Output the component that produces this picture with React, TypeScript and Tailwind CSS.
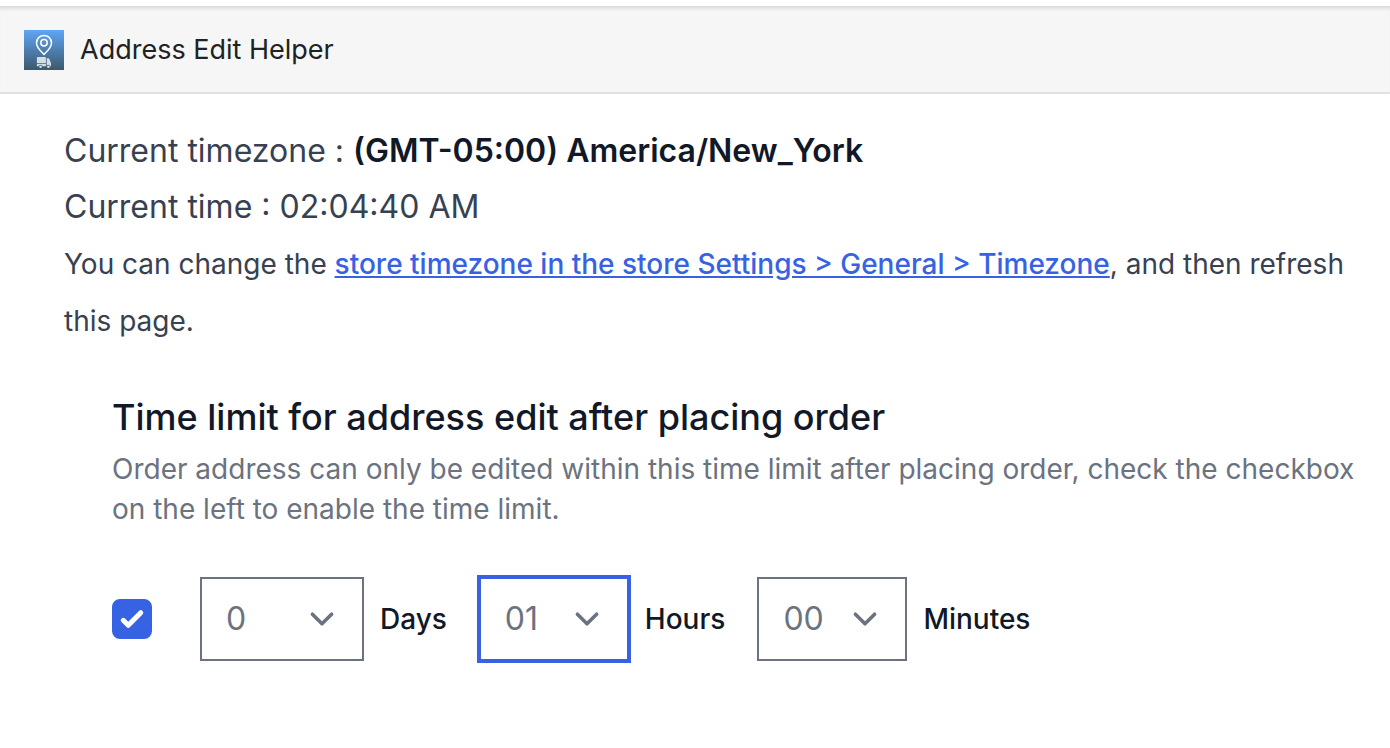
import React, { useState } from 'react';

const range = (count: number) => Array.from({ length: count }, (_, i) => i);
const twoDigits = (n: number) => String(n).padStart(2, '0');

const AppIcon: React.FC = () => (
  <svg viewBox="0 0 40 40" className="w-10 h-10 shrink-0" aria-hidden="true">
    <defs>
      <linearGradient id="app-icon-bg" x1="0" y1="0" x2="0" y2="1">
        <stop offset="0" stopColor="#5fa5f6" />
        <stop offset="1" stopColor="#3d596b" />
      </linearGradient>
    </defs>
    <rect width="40" height="40" fill="url(#app-icon-bg)" />
    <path
      d="M20 24.4C17.2 21.4 12.5 17.8 12.5 12.9a7.5 7.5 0 0 1 15 0c0 4.9-4.7 8.5-7.5 11.5z"
      fill="none"
      stroke="#fff"
      strokeWidth="1.5"
      strokeLinejoin="round"
    />
    <circle cx="20" cy="12.8" r="3.2" fill="none" stroke="#fff" strokeWidth="1.5" />
    <g fill="#d5dee5">
      <path d="M13.6 27h7.6q.7 0 .7.7v5.5h-9v-5.5q0-.7.7-.7z" />
      <path d="M12.9 34h9v2.2h-3.2a2.2 2.2 0 0 0-4.2 0h-1.6z" />
      <path d="M22.7 28.3h1.7q.6 0 1 .6l1.3 3.5q.3.5.3 1v2.8h-.8a2 2 0 0 0-3.5-.6z" />
      <circle cx="16.6" cy="36.8" r="1.3" />
      <circle cx="24.4" cy="36.8" r="1.3" />
    </g>
  </svg>
);

const TimeSelect: React.FC<{
  id: string;
  label: string;
  value: string;
  options: string[];
  onChange: (value: string) => void;
  wide?: boolean;
  active?: boolean;
}> = ({ id, label, value, options, onChange, wide = false, active = false }) => {
  const stateStyle = active ? 'border-[#3662e3] ring-2 ring-[#3662e3]' : 'border-[#6b7280]';

  return (
    <div className="flex items-center gap-4">
      <div className={`relative text-[#6b7280] ${wide ? 'w-[164px]' : 'w-[150px]'}`}>
        <select
          id={id}
          value={value}
          onChange={e => onChange(e.target.value)}
          className={`block w-full h-[84px] appearance-none border-2 bg-white pl-6 pr-16 text-[32px] outline-none ${stateStyle}`}
        >
          {options.map(opt => <option key={opt} value={opt}>{opt}</option>)}
        </select>
        <svg
          viewBox="0 0 20 20"
          className="pointer-events-none absolute right-[18px] top-[18px] w-12 h-12"
          fill="none"
          stroke="currentColor"
          strokeWidth="1.5"
          strokeLinecap="round"
          strokeLinejoin="round"
        >
          <path d="M6 8l4 4 4-4" />
        </svg>
      </div>
      <label htmlFor={id} className="text-[28px] font-medium text-[#111827]">{label}</label>
    </div>
  );
};

export default function App() {
  const [enabled, setEnabled] = useState(true);
  const [days, setDays] = useState('0');
  const [hours, setHours] = useState('01');
  const [minutes, setMinutes] = useState('00');

  return (
    <div className="min-h-screen bg-white pt-[6px] font-['Inter',sans-serif] text-[#374151]">
      <header className="flex items-center gap-4 h-[88px] px-6 pt-[2px] bg-[#f6f6f6] border-b-2 border-[#e1e1e1] shadow-[inset_0_5px_4px_-3px_#d2d4d4]">
        <AppIcon />
        <h1 className="text-[27px] text-[#202223]">Address Edit Helper</h1>
      </header>

      <main className="pt-[29px] pl-16 pr-6">
        <section className="text-[32px] leading-[56px]">
          <p>
            Current timezone : <strong className="font-semibold text-[#111827]">(GMT-05:00) America/New_York</strong>
          </p>
          <p>Current time : 02:04:40 AM</p>
          <p>
            <span className="text-[28px]">
              You can change the{' '}
              <a href="#timezone" className="font-medium text-[#3662e3] underline">
                store timezone in the store Settings &gt; General &gt; Timezone
              </a>
              , and then refresh this page.
            </span>
          </p>
        </section>

        <section className="mt-10 pl-12">
          <h2 className="text-[36px] leading-[56px] font-medium text-[#111827]">
            Time limit for address edit after placing order
          </h2>
          <p className="mt-1 text-[28px] leading-10 text-[#6b7280]">
            Order address can only be edited within this time limit after placing order, check the checkbox on the left to enable the time limit.
          </p>

          <div className="mt-12 flex items-center gap-12">
            <div className="relative w-10 h-10">
              <input
                type="checkbox"
                aria-label="Enable time limit"
                checked={enabled}
                onChange={e => setEnabled(e.target.checked)}
                className="block w-10 h-10 appearance-none rounded-lg border-2 border-[#6b7280] checked:border-[#3662e3] checked:bg-[#3662e3]"
              />
              {enabled && (
                <svg viewBox="0 0 16 16" fill="#fff" className="pointer-events-none absolute inset-0">
                  <path d="M12.207 4.793a1 1 0 010 1.414l-5 5a1 1 0 01-1.414 0l-2-2a1 1 0 011.414-1.414L6.5 9.086l4.293-4.293a1 1 0 011.414 0z" />
                </svg>
              )}
            </div>
            <div className="flex items-center gap-8">
              <TimeSelect id="days" label="Days" value={days} options={range(31).map(String)} onChange={setDays} wide />
              <TimeSelect id="hours" label="Hours" value={hours} options={range(24).map(twoDigits)} onChange={setHours} active />
              <TimeSelect id="minutes" label="Minutes" value={minutes} options={range(60).map(twoDigits)} onChange={setMinutes} />
            </div>
          </div>
        </section>
      </main>
    </div>
  );
}
